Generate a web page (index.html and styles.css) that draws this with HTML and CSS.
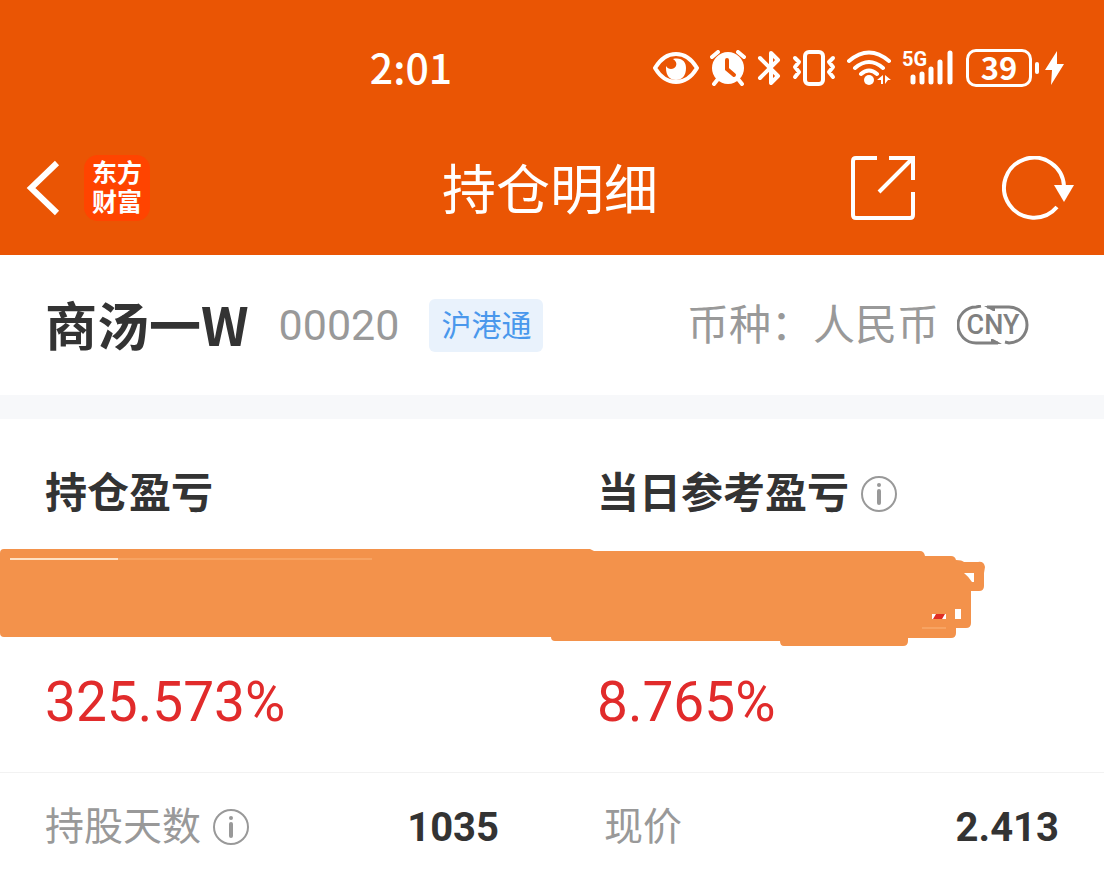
FILE: index.html
```html
<!DOCTYPE html>
<html lang="zh-CN">
<head>
    <meta charset="UTF-8">
    <meta name="viewport" content="width=device-width, initial-scale=1.0">
    <title>持仓明细</title>
    <link rel="stylesheet" href="styles.css">
</head>
<body>
    <header class="header">
        <div class="status-bar">
            <span class="time">2:01</span>
            <div class="status-icons">
                <svg width="46" height="36" viewBox="0 0 46 36">
                    <path d="M2 18C8 8 15 4 23 4s15 4 21 14c-6 10-13 14-21 14S8 28 2 18z" fill="none" stroke="#fff" stroke-width="4" stroke-linejoin="round"/>
                    <path d="M20 9c9-2 13 3 13 9 0 8-4 12-10 12s-10-4-10-12v-2c2 4 8 4 10 0 1-3 0-5-3-7z" fill="#fff"/>
                </svg>
                <svg width="36" height="36" viewBox="0 0 36 36">
                    <path d="M2 7l6-5M28 2l6 5M8 29l-4 5M28 29l4 5" fill="none" stroke="#fff" stroke-width="4" stroke-linecap="round"/>
                    <circle cx="18" cy="18" r="16" fill="#fff"/>
                    <path d="M17 10v9l7 6" fill="none" stroke="#ea5504" stroke-width="4" stroke-linecap="round"/>
                </svg>
                <svg width="24" height="36" viewBox="0 0 24 36">
                    <path d="M3 8l18 18-7 7V3l7 7L3 28" fill="none" stroke="#fff" stroke-width="4" stroke-linecap="round" stroke-linejoin="round"/>
                </svg>
                <svg width="44" height="36" viewBox="0 0 44 36">
                    <rect x="13" y="2" width="18" height="32" rx="4" fill="none" stroke="#fff" stroke-width="4"/>
                    <path d="M3 8l4 4-4 5 4 5-4 5M41 8l-4 4 4 5-4 5 4 5" fill="none" stroke="#fff" stroke-width="4" stroke-linecap="round" stroke-linejoin="round"/>
                </svg>
                <svg width="45" height="36" viewBox="0 0 45 36">
                    <path d="M2 11q20-17 40 0M8 18q14-12 28 0M14 24q8-7 16 0" fill="none" stroke="#fff" stroke-width="4" stroke-linecap="round"/>
                    <circle cx="22" cy="30" r="5" fill="#fff"/>
                    <path d="M30 30l6-5v9h-2v-4zM38 25l6 5h-3l-3 4z" fill="#fff"/>
                </svg>
                <svg class="signal" width="52" height="36" viewBox="0 0 52 36">
                    <text x="-1" y="16" class="network">5G</text>
                    <path d="M10 27v5M19 24v8M28 19v13M37 12v20M47 3v29" fill="none" stroke="#fff" stroke-width="5" stroke-linecap="round"/>
                </svg>
                <div class="battery">39</div>
                <svg width="20" height="36" viewBox="0 0 20 36">
                    <path d="M12 1L0 20h7L6 35l13-21h-7z" fill="#fff"/>
                </svg>
            </div>
        </div>
        <nav class="nav-bar">
            <div class="nav-left">
                <button class="icon-button" aria-label="返回">
                    <svg width="34" height="56" viewBox="0 0 34 56">
                        <path d="M31 3L5 28l26 25" fill="none" stroke="#fff" stroke-width="6"/>
                    </svg>
                </button>
                <a class="logo" href="#">东方<br>财富</a>
            </div>
            <h1 class="title">持仓明细</h1>
            <div class="nav-right">
                <button class="icon-button" aria-label="分享">
                    <svg width="64" height="64" viewBox="0 0 64 64">
                        <path d="M26 2H5q-3 0-3 3v54q0 3 3 3h54q3 0 3-3V36M38 2h24v22M61 3L28 36" fill="none" stroke="#fff" stroke-width="4"/>
                    </svg>
                </button>
                <button class="icon-button" aria-label="刷新">
                    <svg width="72" height="64" viewBox="0 0 72 64">
                        <path d="M62 30A30 30 0 1 0 55 51" fill="none" stroke="#fff" stroke-width="4"/>
                        <path d="M52 29h20L62 46z" fill="#fff"/>
                    </svg>
                </button>
            </div>
        </nav>
    </header>

    <main>
        <section class="stock">
            <h2 class="stock-name">商汤一W</h2>
            <span class="stock-code">00020</span>
            <span class="tag">沪港通</span>
            <span class="currency">币种：人民币</span>
            <svg class="cny" width="72" height="40" viewBox="0 0 72 40">
                <path d="M24 1l-5 1a18 18 0 0 0 0 36h22M30 2h22a18 18 0 0 1 0 36l-4-1" fill="none" stroke="#808080" stroke-width="3"/>
                <path d="M27 1h11v5h-2zM45 39H34v-5h2z" fill="#808080"/>
                <text x="36" y="29" text-anchor="middle" class="cny-text">CNY</text>
            </svg>
        </section>

        <section class="profit">
            <div class="profit-labels">
                <h3>持仓盈亏</h3>
                <h3>当日参考盈亏
                    <button class="icon-button" aria-label="当日参考盈亏说明">
                        <svg width="36" height="36" viewBox="0 0 36 36">
                            <circle cx="18" cy="18" r="17" fill="none" stroke="#999" stroke-width="2"/>
                            <circle cx="18" cy="9" r="2" fill="#999"/>
                            <path d="M18 15v12" stroke="#999" stroke-width="4" stroke-linecap="round"/>
                        </svg>
                    </button>
                </h3>
            </div>
            <!-- 金额遮挡 -->
            <svg class="mask" viewBox="0 0 1104 98">
                <path d="M0 5q0-4 4-4h586l4 2h326q4 0 5 5h26q4 0 5 4 6 0 8 2h14q6-1 7 5l-1 6v13q0 5-5 5h-8v32q0 5-5 5h-10v5q0 5-5 5h-43v3q0 5-5 5H784q-4 0-4-5H555q-4 0-4-4H4q-4 0-4-4z" fill="#f3924b"/>
                <path d="M10 11h108" stroke="#ffe2c4" stroke-width="2"/>
                <path d="M118 11h254M922 80h24" stroke="#fbb47a" stroke-width="1"/>
                <path d="M964 25h10v9h-2q-3-5-8-9zM955 61h6v10h-6zM932 66h14v5h-14z" fill="#fff"/>
                <path d="M936 66h9l-3 5h-9z" fill="#e02e24"/>
            </svg>
            <div class="profit-rates">
                <span>325.573%</span>
                <span>8.765%</span>
            </div>
        </section>

        <dl class="details">
            <div class="detail">
                <dt>持股天数
                    <button class="icon-button" aria-label="持股天数说明">
                        <svg width="36" height="36" viewBox="0 0 36 36">
                            <circle cx="18" cy="18" r="17" fill="none" stroke="#999" stroke-width="2"/>
                            <circle cx="18" cy="9" r="2" fill="#999"/>
                            <path d="M18 15v12" stroke="#999" stroke-width="4" stroke-linecap="round"/>
                        </svg>
                    </button>
                </dt>
                <dd>1035</dd>
            </div>
            <div class="detail">
                <dt>现价</dt>
                <dd>2.413</dd>
            </div>
        </dl>
    </main>
</body>
</html>
```
FILE: styles.css
```css
* {
    box-sizing: border-box;
}
body {
    font-family: Roboto, "Noto Sans CJK SC", sans-serif;
    background-color: #fff;
    color: #333;
    margin: 0;
}
h1, h2, h3, dl, dd {
    margin: 0;
}
svg {
    display: block;
    flex-shrink: 0;
}
.header {
    background-color: #ea5504;
    color: #fff;
}
.status-bar {
    display: flex;
    align-items: center;
    justify-content: space-between;
    height: 120px;
    padding: 16px 39px 0 33.5%;
}
.time {
    padding-bottom: 4px;
    font-family: "Noto Sans CJK SC", sans-serif;
    font-size: 41px;
    font-weight: 500;
    line-height: 48px;
}
.status-icons {
    display: flex;
    align-items: center;
    gap: 11px;
}
.signal {
    overflow: visible;
}
.network {
    font-size: 20px;
    font-weight: bold;
    fill: #fff;
}
.battery {
    position: relative;
    width: 66px;
    height: 38px;
    margin-right: 2px;
    border: 3px solid #fff;
    border-radius: 10px;
    font-family: "Noto Sans CJK SC", sans-serif;
    font-size: 31px;
    font-weight: bold;
    line-height: 30px;
    text-align: center;
}
.battery::after {
    content: "";
    position: absolute;
    top: 10px;
    right: -10px;
    width: 4px;
    height: 12px;
    border-radius: 2px;
    background-color: #fff;
}
.nav-bar {
    display: grid;
    grid-template-columns: 1fr auto 1fr;
    align-items: center;
    height: 135px;
    padding: 0 30px 0 26px;
}
.nav-left {
    display: flex;
    align-items: center;
    gap: 24px;
}
.nav-right {
    display: flex;
    align-items: center;
    justify-content: flex-end;
    gap: 87px;
}
.icon-button {
    padding: 0;
    border: none;
    background: none;
    cursor: pointer;
}
.logo {
    width: 66px;
    height: 66px;
    padding-top: 4px;
    border-radius: 14px;
    background-color: #ff4400;
    color: #fff;
    font-size: 25px;
    font-weight: bold;
    line-height: 29px;
    text-align: center;
    text-decoration: none;
}
.title {
    padding-top: 8px;
    font-size: 54px;
    font-weight: normal;
    line-height: 64px;
}
.stock {
    display: flex;
    align-items: center;
    height: 140px;
    padding: 0 75px 0 45px;
    white-space: nowrap;
}
.stock-name {
    padding-bottom: 2px;
    font-family: "Noto Sans CJK SC", sans-serif;
    font-size: 52px;
    line-height: 60px;
}
.stock-code {
    margin-left: 30px;
    color: #999;
    font-size: 43px;
}
.tag {
    margin-left: 30px;
    padding: 0 12px;
    border-radius: 6px;
    background-color: #e9f2fc;
    color: #4a98ec;
    font-size: 30px;
    line-height: 53px;
}
.currency {
    margin-left: auto;
    padding-top: 2px;
    color: #999;
    font-size: 42px;
    line-height: 60px;
}
.cny {
    margin-left: 18px;
}
.cny-text {
    font-size: 27px;
    font-weight: 500;
    fill: #808080;
}
.profit {
    padding-top: 45px;
    border-top: 24px solid #f7f8fa;
    border-bottom: 1px solid #f2f2f2;
}
.profit-labels, .profit-rates {
    display: grid;
    grid-template-columns: 1fr 1fr;
}
.profit-labels h3 {
    display: flex;
    align-items: center;
    gap: 12px;
    padding-left: 45px;
    font-size: 42px;
    line-height: 60px;
}
.mask {
    width: 100%;
    margin-top: 24px;
}
.profit-rates {
    padding: 23px 0 37px;
    color: #e12b2b;
    font-size: 55px;
    line-height: 66px;
}
.profit-rates span {
    padding-left: 45px;
}
.details {
    display: grid;
    grid-template-columns: 1fr 1fr;
}
.detail {
    display: flex;
    align-items: center;
    justify-content: space-between;
    height: 108px;
    padding: 0 45px 0 52px;
}
.detail:first-child {
    padding: 0 53px 0 45px;
}
.detail dt {
    display: flex;
    align-items: center;
    gap: 12px;
    color: #999;
    font-size: 39px;
    line-height: 48px;
}
.detail dd {
    padding-top: 2px;
    font-size: 40px;
    font-weight: bold;
    line-height: 48px;
}
```
